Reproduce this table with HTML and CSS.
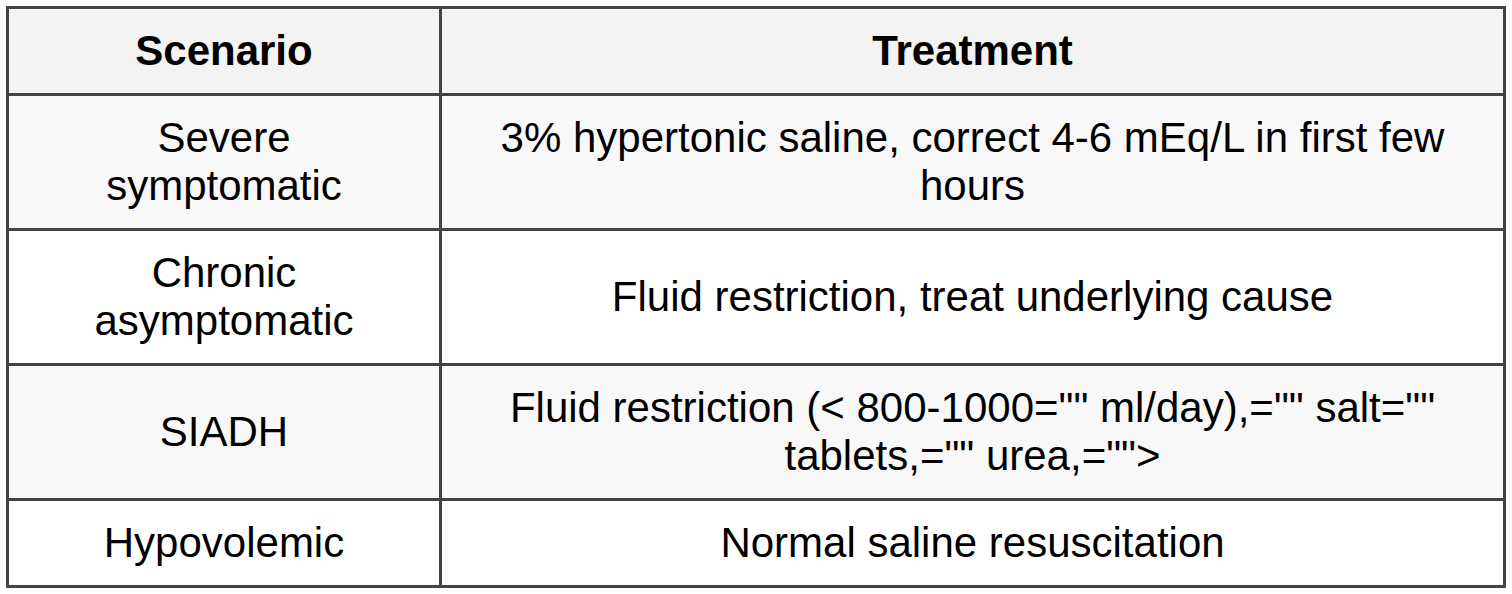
FILE: index.html
```html
<!DOCTYPE html>
<html>
<head>
<meta charset="utf-8">
<link rel="stylesheet" href="styles.css">
</head>
<body>
<table class="grid">
  <colgroup><col class="c1"><col class="c2"></colgroup>
  <thead>
    <tr><th>Scenario</th><th>Treatment</th></tr>
  </thead>
  <tbody>
    <tr class="odd"><td>Severe symptomatic</td><td>3% hypertonic saline, correct 4-6 mEq/L in first few hours</td></tr>
    <tr><td>Chronic asymptomatic</td><td>Fluid restriction, treat underlying cause</td></tr>
    <tr class="odd"><td>SIADH</td><td>Fluid restriction (&lt; 800-1000="" ml/day),="" salt="" tablets,="" urea,="">
</td></tr>
    <tr><td>Hypovolemic</td><td>Normal saline resuscitation</td></tr>
  </tbody>
</table>
</body>
</html>
```
FILE: styles.css
```css
html, body { margin: 0; padding: 0; background: #fff; }
.grid {
  margin: 6px 0 0 6px;
  border-collapse: separate;
  border-spacing: 0;
  border-left: 3px solid #444;
  border-top: 3px solid #444;
  table-layout: fixed;
  width: 1500px;
  font-family: "Liberation Sans", Arial, sans-serif;
  font-size: 42px;
  line-height: 48px;
  color: #000;
}
.c1 { width: 433px; }
.c2 { width: 1064px; }
.grid th, .grid td {
  border-right: 3px solid #444;
  border-bottom: 3px solid #444;
  padding: 18px 30px;
  text-align: center;
  vertical-align: middle;
}
.grid th { background: #f3f3f3; font-weight: bold; }
.grid tr.odd td { background: #f8f8f8; }
```
